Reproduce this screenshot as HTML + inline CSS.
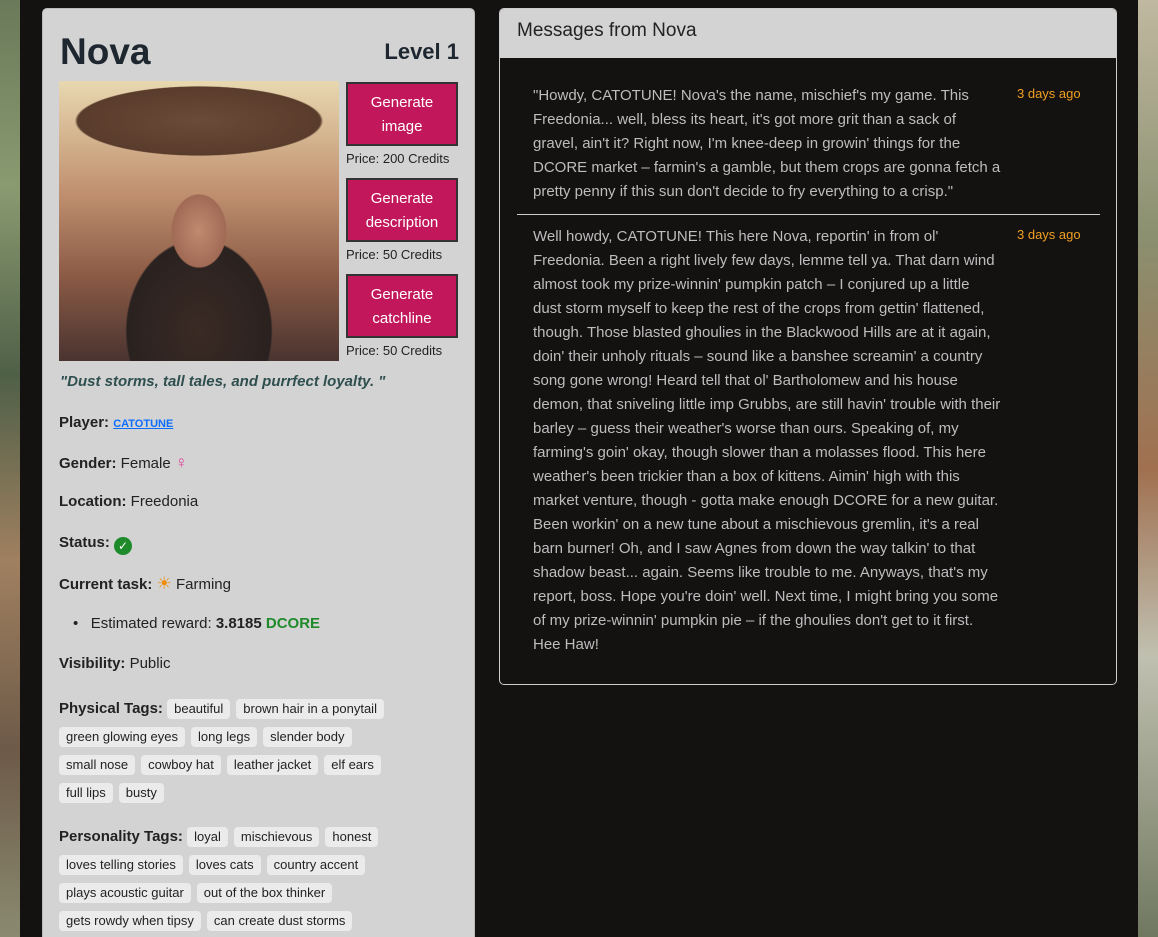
<!DOCTYPE html>
<html><head><meta charset="utf-8"><style>
*{box-sizing:border-box;margin:0;padding:0}
html,body{width:1158px;height:937px;overflow:hidden}
body{background:#141111;font-family:"Liberation Sans",sans-serif;position:relative}
.sl{position:absolute;top:0;left:0;width:20px;height:937px;background:linear-gradient(180deg,#6a7a5a 0%,#8a9a70 20%,#4f6048 40%,#a08060 60%,#6d5a48 80%,#8a8a70 100%)}
.sr{position:absolute;top:0;right:0;width:20px;height:937px;background:linear-gradient(180deg,#c0b8a0 0%,#8a9070 25%,#a07050 50%,#c0c0b0 70%,#707860 100%)}
.card{position:absolute;left:42px;top:8px;width:433px;height:929px;background:#d3d3d3;border-radius:5px 5px 0 0;border:1px solid #bbb;border-bottom:none;overflow:hidden}
h1{position:absolute;left:17px;top:22px;font-size:37px;color:#1e2630;font-weight:bold}
.lvl{position:absolute;right:15px;top:30px;font-size:22px;color:#1e2630;font-weight:bold}
.img{position:absolute;left:16px;top:72px;width:280px;height:280px;background:radial-gradient(ellipse 45px 60px at 140px 150px,#c08a70 0%,#a06a55 60%,transparent 62%),radial-gradient(ellipse 135px 38px at 140px 40px,#6a4a38 0%,#5a3c2c 90%,transparent 92%),radial-gradient(ellipse 80px 100px at 140px 250px,#3a2a24 0%,#2a2220 90%,transparent 92%),linear-gradient(180deg,#e8d8b0 0%,#c09070 40%,#8a5a45 70%,#4a3430 100%)}
.btn{position:absolute;left:303px;width:112px;height:64px;background:#c2185b;border:2px solid #333;color:#fff;font-size:15px;text-align:center;line-height:24px;padding-top:7px}
.pr{position:absolute;left:303px;font-size:13px;color:#222}
.q{position:absolute;left:17px;top:364px;font-size:15px;font-style:italic;font-weight:bold;color:#2f4f4f}
.row{position:absolute;left:16px;font-size:15px;color:#222;line-height:18px}
b{font-weight:bold}
.tag{display:inline-block;background:#ebebeb;border-radius:4px;font-size:13px;padding:0 7px;height:20px;line-height:20px;margin-right:6px;color:#222}
.rp{position:absolute;left:499px;top:8px;width:618px;height:677px;border:1px solid #ccc;border-radius:5px;overflow:hidden}
.rh{height:49px;background:#d3d3d3;font-size:19px;color:#222;padding:11px 17px}
.msg{position:absolute;left:33px;width:468px;font-size:15px;line-height:24px;color:#bdbdbd}
.t{position:absolute;left:517px;font-size:13px;color:#f0a020}
</style></head><body>
<div class="sl"></div><div class="sr"></div>
<div class="card">
<h1>Nova</h1><div class="lvl">Level 1</div>
<div class="img"></div>
<div class="btn" style="top:73px">Generate<br>image</div><div class="pr" style="top:142px">Price: 200 Credits</div>
<div class="btn" style="top:169px">Generate<br>description</div><div class="pr" style="top:238px">Price: 50 Credits</div>
<div class="btn" style="top:265px">Generate<br>catchline</div><div class="pr" style="top:334px">Price: 50 Credits</div>
<div class="q">"Dust storms, tall tales, and purrfect loyalty. "</div>
<div class="row" style="top:405px"><b>Player:</b> <span style="color:#0d6efd;text-decoration:underline;font-size:11px;font-weight:bold">CATOTUNE</span></div>
<div class="row" style="top:445px"><b>Gender:</b> Female <span style="color:#e0409a;font-size:17px;line-height:18px">♀</span></div>
<div class="row" style="top:484px"><b>Location:</b> Freedonia</div>
<div class="row" style="top:525px"><b>Status:</b> <span style="display:inline-block;width:18px;height:18px;border-radius:50%;background:#1e8a2a;color:#fff;font-size:12px;text-align:center;line-height:18px;vertical-align:-3px">✓</span></div>
<div class="row" style="top:566px"><b>Current task:</b> <span style="color:#f08a00;font-size:17px;line-height:18px">☀</span> Farming</div>
<div class="row" style="top:606px;left:30px">•&nbsp;&nbsp; Estimated reward: <b>3.8185</b> <b style="color:#1e8a2a">DCORE</b></div>
<div class="row" style="top:646px"><b>Visibility:</b> Public</div>
<div class="row" style="top:686px;line-height:28px;width:400px"><b>Physical Tags:</b> <span class="tag">beautiful</span><span class="tag">brown hair in a ponytail</span><br><span class="tag">green glowing eyes</span><span class="tag">long legs</span><span class="tag">slender body</span><br><span class="tag">small nose</span><span class="tag">cowboy hat</span><span class="tag">leather jacket</span><span class="tag">elf ears</span><br><span class="tag">full lips</span><span class="tag">busty</span></div>
<div class="row" style="top:814px;line-height:28px;width:400px"><b>Personality Tags:</b> <span class="tag">loyal</span><span class="tag">mischievous</span><span class="tag">honest</span><br><span class="tag">loves telling stories</span><span class="tag">loves cats</span><span class="tag">country accent</span><br><span class="tag">plays acoustic guitar</span><span class="tag">out of the box thinker</span><br><span class="tag">gets rowdy when tipsy</span><span class="tag">can create dust storms</span></div>
</div>
<div class="rp">
<div class="rh">Messages from Nova</div>
<div class="msg" style="top:75px">"Howdy, CATOTUNE! Nova's the name, mischief's my game. This Freedonia... well, bless its heart, it's got more grit than a sack of gravel, ain't it? Right now, I'm knee-deep in growin' things for the DCORE market – farmin's a gamble, but them crops are gonna fetch a pretty penny if this sun don't decide to fry everything to a crisp."</div>
<div class="t" style="top:77px">3 days ago</div>
<div style="position:absolute;left:17px;top:205px;width:583px;height:1px;background:#ccc"></div>
<div class="msg" style="top:216px">Well howdy, CATOTUNE! This here Nova, reportin' in from ol' Freedonia. Been a right lively few days, lemme tell ya. That darn wind almost took my prize-winnin' pumpkin patch – I conjured up a little dust storm myself to keep the rest of the crops from gettin' flattened, though. Those blasted ghoulies in the Blackwood Hills are at it again, doin' their unholy rituals – sound like a banshee screamin' a country song gone wrong! Heard tell that ol' Bartholomew and his house demon, that sniveling little imp Grubbs, are still havin' trouble with their barley – guess their weather's worse than ours. Speaking of, my farming's goin' okay, though slower than a molasses flood. This here weather's been trickier than a box of kittens. Aimin' high with this market venture, though - gotta make enough DCORE for a new guitar. Been workin' on a new tune about a mischievous gremlin, it's a real barn burner! Oh, and I saw Agnes from down the way talkin' to that shadow beast... again. Seems like trouble to me. Anyways, that's my report, boss. Hope you're doin' well. Next time, I might bring you some of my prize-winnin' pumpkin pie – if the ghoulies don't get to it first. Hee Haw!</div>
<div class="t" style="top:218px">3 days ago</div>
</div>
</body></html>
